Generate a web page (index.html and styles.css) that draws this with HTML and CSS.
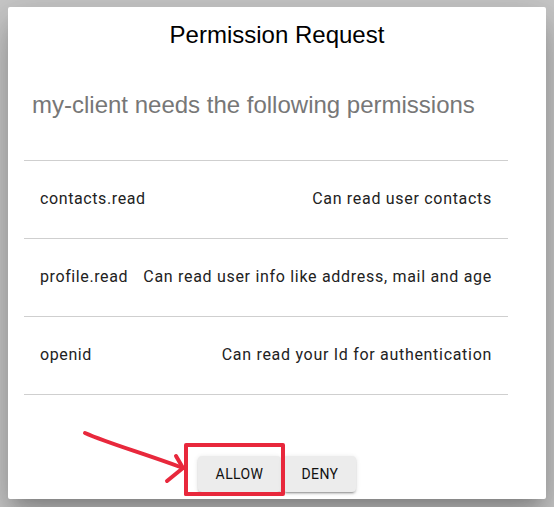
FILE: index.html
```html
<!DOCTYPE html>
<html lang="en">
<head>
<meta charset="utf-8">
<title>Permission Request</title>
<link rel="stylesheet" href="styles.css">
</head>
<body>
<div class="card">
  <h2 class="title">Permission Request</h2>
  <p class="subtitle">my-client needs the following permissions</p>
  <ul class="perms">
    <li class="perm"><span class="scope">contacts.read</span><span class="desc">Can read user contacts</span></li>
    <li class="perm"><span class="scope">profile.read</span><span class="desc">Can read user info like address, mail and age</span></li>
    <li class="perm"><span class="scope">openid</span><span class="desc">Can read your Id for authentication</span></li>
  </ul>
  <div class="actions">
    <button class="btn">ALLOW</button>
    <button class="btn">DENY</button>
  </div>
</div>
<svg class="annot" width="554" height="507" viewBox="0 0 554 507">
  <g fill="none" stroke="#e8283c" stroke-width="4" stroke-linecap="round" stroke-linejoin="round">
    <path d="M186 445 L283 445 L283 494 L186 494 Z"/>
    <path d="M85 433 C110 444 140 452 183 468"/>
    <path d="M176 456 L183 468 L167 481"/>
    <path d="M186 494 L214 494"/>
  </g>
</svg>
</body>
</html>
```
FILE: styles.css
```css
html, body {
  margin: 0;
  padding: 0;
}
body {
  width: 554px;
  height: 507px;
  background: #c9c9c9;
  overflow: hidden;
  position: relative;
}
.card {
  box-sizing: border-box;
  width: 538px;
  height: 492px;
  margin: 7px 8px 0 8px;
  background: #fff;
  border-radius: 2px;
  box-shadow: 0 11px 15px -7px rgba(0,0,0,.2), 0 24px 38px 3px rgba(0,0,0,.14), 0 9px 46px 8px rgba(0,0,0,.12);
  padding: 14px 0 7px 0;
  display: flex;
  flex-direction: column;
}
.title {
  margin: 0;
  font-family: "Liberation Sans", Arial, sans-serif;
  font-weight: 400;
  font-size: 24px;
  line-height: 28px;
  color: #000;
  text-align: center;
}
.subtitle {
  margin: 42px 0 0 24px;
  font-family: "Liberation Sans", Arial, sans-serif;
  font-size: 24px;
  line-height: 28px;
  color: #777;
}
.perms {
  list-style: none;
  margin: 41px 38px 0 16px;
  padding: 0;
  border-top: 1px solid #cfcfcf;
}
.perm {
  box-sizing: border-box;
  height: 78px;
  border-bottom: 1px solid #cfcfcf;
  display: flex;
  align-items: center;
  justify-content: space-between;
  padding: 0 16px 2px 16px;
  font-family: Roboto, "Noto Sans", sans-serif;
  font-size: 16px;
  letter-spacing: 0.6px;
  color: #222;
}
.desc {
  letter-spacing: 0.7px;
}
.actions {
  margin-top: 61px;
  display: flex;
  justify-content: center;
  gap: 2px;
}
.btn {
  height: 36px;
  min-width: 64px;
  padding: 0 18px;
  border: none;
  border-radius: 4px;
  background: #ececec;
  box-shadow: 0 3px 1px -2px rgba(0,0,0,.2), 0 2px 2px 0 rgba(0,0,0,.14), 0 1px 5px 0 rgba(0,0,0,.12);
  font-family: Roboto, "Noto Sans", sans-serif;
  font-size: 14px;
  letter-spacing: 0.4px;
  color: #111;
}
.annot {
  position: absolute;
  left: 0;
  top: 0;
  pointer-events: none;
}
```
